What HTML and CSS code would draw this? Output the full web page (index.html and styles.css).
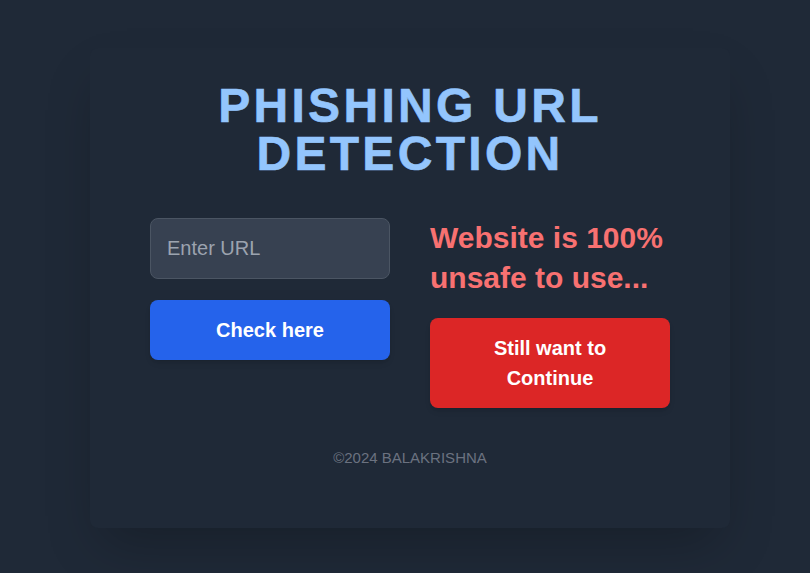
FILE: index.html
```html
<!DOCTYPE html>
<html lang="en">
<head>
<meta charset="utf-8">
<title>Phishing URL Detection</title>
<link rel="stylesheet" href="styles.css">
</head>
<body>
<main class="page">
  <section class="card">
    <h1 class="title">PHISHING URL<br>DETECTION</h1>
    <div class="row">
      <div class="col">
        <input class="url-input" type="text" placeholder="Enter URL">
        <button class="btn btn-check">Check here</button>
      </div>
      <div class="col">
        <p class="result">Website is 100% unsafe to use...</p>
        <button class="btn btn-continue">Still want to Continue</button>
      </div>
    </div>
    <footer class="footer">©2024 BALAKRISHNA</footer>
  </section>
</main>
</body>
</html>
```
FILE: styles.css
```css
* { box-sizing: border-box; }
html, body { margin: 0; padding: 0; }
body {
  background: #1f2937;
  font-family: "Liberation Sans", Arial, sans-serif;
}
.page {
  min-height: 573px;
  padding: 3px 0 0 10px;
  display: flex;
  align-items: center;
  justify-content: center;
}
.card {
  width: 640px;
  background: #1f2937;
  border-radius: 8px;
  box-shadow: 0 25px 50px -12px rgba(0, 0, 0, 0.25);
  padding: 34px 60px 60px;
  display: flex;
  flex-direction: column;
  align-items: center;
}
.title {
  margin: 0 0 40px;
  font-size: 48px;
  line-height: 48px;
  font-weight: 900;
  letter-spacing: 3.3px;
  text-align: center;
  color: #93c5fd;
  -webkit-text-stroke: 0.6px #93c5fd;
}
.row {
  display: flex;
  gap: 40px;
  width: 520px;
}
.col {
  width: 240px;
  display: flex;
  flex-direction: column;
}
.url-input {
  height: 61px;
  width: 100%;
  padding: 0 16px;
  background: #374151;
  border: 1px solid #4b5563;
  border-radius: 8px;
  color: #e5e7eb;
  font-family: "Liberation Sans", Arial, sans-serif;
  font-size: 20px;
  outline: none;
}
.url-input::placeholder { color: #9ca3af; }
.btn {
  border: none;
  border-radius: 8px;
  color: #ffffff;
  font-family: "Liberation Sans", Arial, sans-serif;
  font-weight: 700;
  font-size: 20px;
  width: 100%;
  box-shadow: 0 4px 6px -1px rgba(0,0,0,0.1), 0 2px 4px -2px rgba(0,0,0,0.1);
}
.btn-check {
  margin-top: 21px;
  height: 60px;
  background: #2563eb;
}
.btn-continue {
  height: 90px;
  padding: 15px 50px;
  line-height: 30px;
  background: #dc2626;
}
.result {
  margin: 0 0 20px;
  color: #f87171;
  font-weight: 700;
  font-size: 30px;
  line-height: 40px;
}
.footer {
  margin-top: 40px;
  color: #6b7280;
  font-size: 15px;
  line-height: 20px;
}
```
